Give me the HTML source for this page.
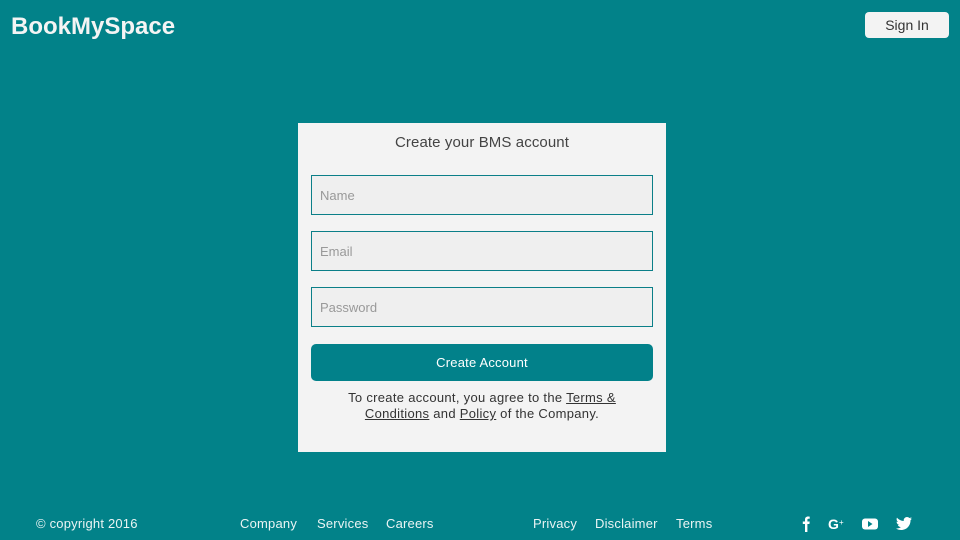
<!DOCTYPE html>
<html><head><style>
*{margin:0;padding:0;box-sizing:border-box}
body{width:960px;height:540px;background:#028289;font-family:"Liberation Sans",sans-serif;position:relative;overflow:hidden;color:#fff}
.logo{position:absolute;left:11px;top:13px;font-size:24px;font-weight:bold;color:#f4f4f4;letter-spacing:0}
.signin{position:absolute;left:865px;top:12px;width:84px;height:26px;background:#f3f3f3;border-radius:4px;color:#333;font-size:14px;text-align:center;line-height:26px}
.card{position:absolute;left:298px;top:123px;width:368px;height:329px;background:#f3f3f3}
.title{position:absolute;top:11px;width:100%;text-align:center;font-size:15px;color:#444;letter-spacing:0.1px}
.inp{position:absolute;left:13px;width:342px;height:40px;border:1px solid #0b7f88;background:#efefef;color:#999;font-size:13px;padding-left:8px;line-height:40px}
.btn{position:absolute;left:13px;top:221px;width:342px;height:37px;background:#02818a;border-radius:5px;color:#fff;font-size:13px;text-align:center;line-height:37px;letter-spacing:0.2px}
.terms{position:absolute;top:267px;left:10px;width:348px;text-align:center;font-size:13px;color:#333;line-height:16px;letter-spacing:0.3px}
.f{position:absolute;top:516px;font-size:13px;color:#eaf4f4;letter-spacing:0.2px}
</style></head><body>
<div class="logo">BookMySpace</div>
<div class="signin">Sign In</div>
<div class="card">
<div class="title">Create your BMS account</div>
<div class="inp" style="top:52px">Name</div>
<div class="inp" style="top:108px">Email</div>
<div class="inp" style="top:164px">Password</div>
<div class="btn">Create Account</div>
<div class="terms">To create account, you agree to the <u>Terms &amp;<br>Conditions</u> and <u>Policy</u> of the Company.</div>
</div>
<div class="f" style="left:36px">© copyright 2016</div>
<div class="f" style="left:240px">Company</div>
<div class="f" style="left:317px">Services</div>
<div class="f" style="left:386px">Careers</div>
<div class="f" style="left:533px">Privacy</div>
<div class="f" style="left:595px">Disclaimer</div>
<div class="f" style="left:676px">Terms</div>
<svg style="position:absolute;left:798px;top:515px" width="120" height="18" viewBox="0 0 120 18" fill="#fff">
<path d="M7 17V9H4.8V6.5H7V4.6C7 2.6 8.2 1.5 10 1.5c.8 0 1.5.1 1.7.1v2.1h-1.2c-.9 0-1.1.5-1.1 1.1v1.7h2.3L11.4 9H9.4v8z"/>
<text x="30" y="14" font-size="14" font-family="Liberation Sans" font-weight="bold">G</text>
<text x="41" y="10" font-size="8" font-family="Liberation Sans">+</text>
<rect x="64" y="3.5" width="16" height="11" rx="3"/>
<path d="M70 6v6l4.5-3z" fill="#028289"/>
<path d="M114 3.5c-.6.3-1.2.4-1.9.5.7-.4 1.2-1 1.4-1.8-.6.4-1.3.6-2.1.8-.6-.6-1.500-1-2.4-1-1.8 0-3.3 1.5-3.3 3.3 0 .3 0 .5.1.7-2.7-.1-5.2-1.4-6.8-3.4-.3.5-.4 1-.4 1.7 0 1.1.6 2.1 1.5 2.7-.5 0-1-.2-1.5-.4 0 1.6 1.1 2.9 2.6 3.2-.3.1-.6.1-.9.1-.2 0-.4 0-.6-.1.4 1.3 1.6 2.3 3.1 2.3-1.1.9-2.5 1.4-4.1 1.4H98c1.5.9 3.2 1.5 5.1 1.5 6.1 0 9.4-5 9.4-9.4v-.4c.6-.5 1.1-1 1.5-1.7z"/>
</svg>
</body></html>
